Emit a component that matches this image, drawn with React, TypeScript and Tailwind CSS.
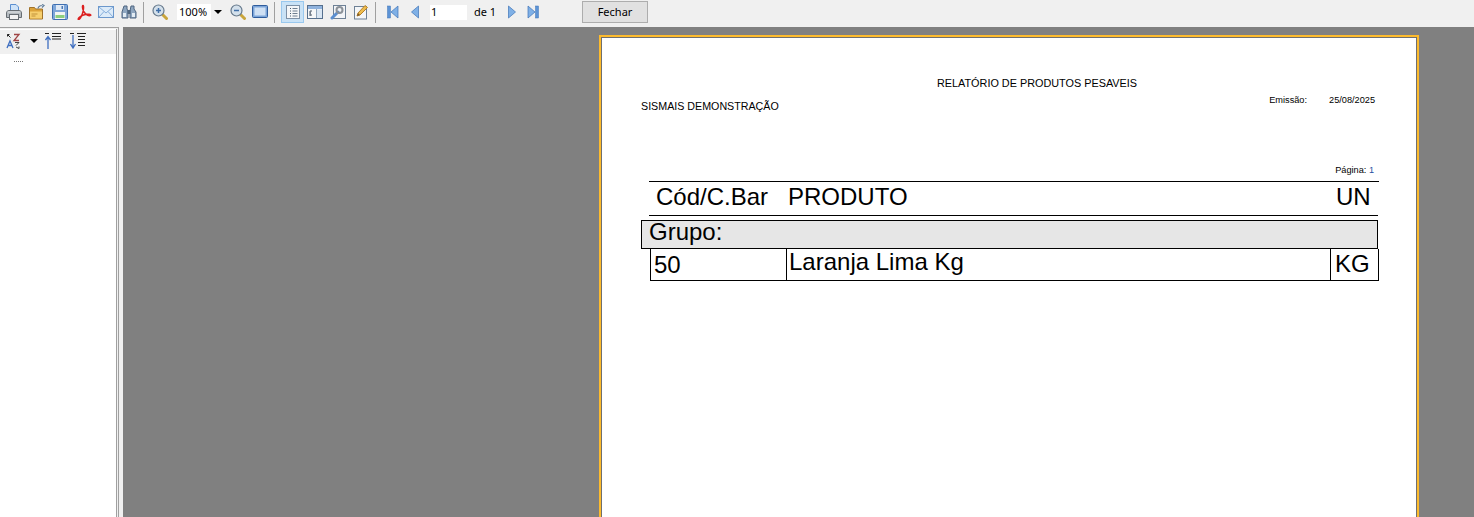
import type { ReactNode } from "react";

const Sep = ({ ml }: { ml: string }) => (
  <div className={`h-[21px] w-px bg-[#a0a0a0] ${ml}`} />
);

const Ico = ({ className, children }: { className: string; children: ReactNode }) => (
  <svg viewBox="0 0 16 16" className={`h-4 w-4 shrink-0 ${className}`}>
    {children}
  </svg>
);

const PrintIcon = () => (
  <Ico className="ml-[6px]">
    <path d="M4.500 .5h5.500l2.500 2.500v6h-8z" fill="#cfe3f8" stroke="#5b8fd0" />
    <path d="M.5 9q0-2.500 2.500-2.500h10q2.500 0 2.500 2.500v4.500H.5z" fill="#b4babf" stroke="#666c72" />
    <rect x="3.500" y="10.500" width="9" height="5" fill="#f2f2f2" stroke="#666c72" />
    <path d="M1.500 8h13" stroke="#e3e6e8" />
  </Ico>
);

const OpenIcon = () => (
  <Ico className="ml-[7px]">
    <path d="M.5 3.500h5l1 1.500h7v10H.5z" fill="#dca238" stroke="#a0722a" />
    <path d="M1 7.500h12V14.500H1z" fill="#f6cf6e" />
    <path d="M2.500 10h6M2.500 12h4" stroke="#c2923a" />
    <path d="M9 4.500q.5-3 4-3M13 .5l2 1-2 2" fill="none" stroke="#5e7b99" strokeWidth="1.200" />
  </Ico>
);

const SaveIcon = () => (
  <Ico className="ml-[7px]">
    <rect x=".5" y=".5" width="15" height="15" rx="1" fill="#7ea6d9" stroke="#3f6fb0" />
    <rect x="4" y="1" width="8" height="5" fill="#dfe9f5" />
    <rect x="9.500" y="2" width="1.500" height="3" fill="#4b78b4" />
    <rect x="3" y="8" width="10" height="7" fill="#f3f6f2" />
    <rect x="3.500" y="11" width="9" height="3" fill="#8ccf7e" />
  </Ico>
);

const PdfIcon = () => (
  <Ico className="ml-[8px]">
    <path
      d="M7 1.500c-1 0 -.5 4 1 6.500s5 4.500 6.500 3.500-3-2-7 -.5-6 4-5 4.500 3-3 4-6 1.500-8 .5-8z"
      fill="none"
      stroke="#dc2020"
      strokeWidth="1.500"
    />
  </Ico>
);

const MailIcon = () => (
  <Ico className="ml-[6px]">
    <rect x=".5" y="2.500" width="15" height="11" fill="#dcebf9" stroke="#6c98cc" />
    <path d="M1 3l7 6 7-6M1 13l5-5.500M15 13l-5-5.500" fill="none" stroke="#86aedb" />
  </Ico>
);

const BinocularsIcon = () => (
  <Ico className="ml-[7px]">
    <path d="M3 2h3v3l1 2v7H1V8z" fill="#8ea6c0" stroke="#4e6580" />
    <path d="M10 2h3v3l2 3v6H9V7z" fill="#8ea6c0" stroke="#4e6580" />
    <rect x="6.500" y="6" width="3" height="4" fill="#51677f" />
    <rect x="2" y="9" width="3" height="4" fill="#e3ecf4" />
    <rect x="11" y="9" width="3" height="4" fill="#e3ecf4" />
  </Ico>
);

const ZoomIcon = ({ plus, className }: { plus: boolean; className: string }) => (
  <Ico className={className}>
    <path d="M10.500 10.500l4 4" stroke="#c9a53c" strokeWidth="3" strokeLinecap="round" />
    <circle cx="6.500" cy="6.500" r="5.500" fill="#d3e0eb" stroke="#66798c" strokeWidth="1.200" />
    <path d="M4 6.500h5" stroke="#3f6fa8" strokeWidth="1.500" />
    {plus && <path d="M6.500 4v5" stroke="#3f6fa8" strokeWidth="1.500" />}
  </Ico>
);

const ViewIcon = () => (
  <Ico className="ml-[6px]">
    <rect x=".5" y="1.500" width="15" height="12" rx="1" fill="#7ba4d8" stroke="#2f5c9c" />
    <rect x="2.500" y="3.500" width="11" height="8" fill="#cfe0f4" />
  </Ico>
);

const PageLinesIcon = () => (
  <svg viewBox="0 0 16 16" className="h-4 w-4">
    <rect x="1.500" y="1.500" width="13" height="13" fill="#f4f6f8" stroke="#7d90a6" />
    <path d="M5 4.500h1M5 7h1M5 9.500h1M5 12h1" stroke="#46586c" />
    <path d="M7.500 4.500h5M7.500 7h5M7.500 9.500h5M7.500 12h5" stroke="#6f7f90" />
  </svg>
);

const TreeIcon = () => (
  <Ico className="ml-[3px]">
    <rect x=".5" y="1.500" width="15" height="13" fill="#f5f7f9" stroke="#56708e" />
    <rect x="1" y="2" width="14" height="3" fill="#8fb2dd" />
    <path d="M9.500 5v9" stroke="#8fa5bb" />
    <rect x="10" y="5.500" width="5" height="8.500" fill="#d9e6f3" />
    <path d="M3 7h2M3 9h1M3 11h2M3 7v5" stroke="#4c5b6b" fill="none" />
  </Ico>
);

const ToolsIcon = () => (
  <Ico className="ml-[7px]">
    <rect x="3.500" y="1.500" width="12" height="13" fill="#f2f4f7" stroke="#6e8196" />
    <path d="M2 14l6-6" stroke="#5b8fd0" strokeWidth="3" strokeLinecap="round" />
    <circle cx="9.500" cy="6" r="3" fill="none" stroke="#8b9198" strokeWidth="2" />
  </Ico>
);

const EditIcon = () => (
  <Ico className="ml-[7px]">
    <rect x="1.500" y="2.500" width="12" height="12.500" fill="#f4f6f8" stroke="#6e8196" />
    <path d="M4 12l1-3 7-7.500 2.500 2L7 11z" fill="#eebd4e" stroke="#b5802a" />
    <path d="M4 12l1-3 2 2z" fill="#7d5a2a" />
  </Ico>
);

const NavIcon = ({ kind, className }: { kind: "first" | "prev" | "next" | "last"; className: string }) => (
  <svg viewBox="0 0 12 14" className={`h-[14px] w-3 shrink-0 ${className}`}>
    {kind === "first" && (
      <>
        <rect x=".5" y="1" width="3" height="12" fill="#5c93d6" stroke="#3f74b8" strokeWidth=".5" />
        <path d="M11 1v12L4 7z" fill="#7fb0e6" stroke="#3f74b8" strokeWidth=".7" />
      </>
    )}
    {kind === "prev" && <path d="M9.500 1v12L2.500 7z" fill="#7fb0e6" stroke="#3f74b8" strokeWidth=".7" />}
    {kind === "next" && <path d="M2.500 1v12l7-6z" fill="#7fb0e6" stroke="#3f74b8" strokeWidth=".7" />}
    {kind === "last" && (
      <>
        <path d="M1 1v12l7-6z" fill="#7fb0e6" stroke="#3f74b8" strokeWidth=".7" />
        <rect x="8.500" y="1" width="3" height="12" fill="#5c93d6" stroke="#3f74b8" strokeWidth=".5" />
      </>
    )}
  </svg>
);

const Toolbar = () => (
  <div className="flex h-[27px] items-center bg-[#f0f0f0] pb-[3px] font-['Noto_Sans',sans-serif] text-[11px] text-black">
    <PrintIcon />
    <OpenIcon />
    <SaveIcon />
    <PdfIcon />
    <MailIcon />
    <BinocularsIcon />
    <Sep ml="ml-[6px]" />
    <ZoomIcon plus className="ml-[8px]" />
    <div className="ml-[9px] flex h-4 w-[47px] items-center justify-between bg-white pl-[2px]">
      <span>100%</span>
      <span className="flex h-4 w-[13px] items-center justify-center bg-[#f0f0f0]">
        <span className="h-0 w-0 border-x-4 border-t-4 border-x-transparent border-t-black" />
      </span>
    </div>
    <ZoomIcon plus={false} className="ml-[6px]" />
    <ViewIcon />
    <Sep ml="ml-[6px]" />
    <div className="ml-[6px] flex h-[22px] w-[23px] items-center justify-center border border-[#99c8ee] bg-[#c9e2f6]">
      <PageLinesIcon />
    </div>
    <TreeIcon />
    <ToolsIcon />
    <EditIcon />
    <Sep ml="ml-[6px]" />
    <NavIcon kind="first" className="ml-[11px]" />
    <NavIcon kind="prev" className="ml-[10px]" />
    <div className="ml-[9px] flex h-[15px] w-[37px] items-center bg-white pl-[1px]">1</div>
    <span className="ml-[7px] w-[22px] whitespace-nowrap">de 1</span>
    <NavIcon kind="next" className="ml-[10px]" />
    <NavIcon kind="last" className="ml-[9px]" />
    <button className="ml-[43px] h-[22px] w-[66px] border border-[#adadad] bg-[#e1e1e1] text-[11px]">
      Fechar
    </button>
  </div>
);

const SortAzIcon = () => (
  <svg viewBox="0 0 16 16" className="h-4 w-4">
    <path d="M1.500 1.500l3 3M1.500 1.500h2M1.500 1.500v2" stroke="#222" fill="none" />
    <path d="M8 1.500h5l-5 6h5" stroke="#a04545" strokeWidth="1.300" fill="none" />
    <path d="M1 15l3-7 3 7M2.200 12.500h3.600" stroke="#3f6fc0" strokeWidth="1.300" fill="none" />
    <path d="M9 9.500h4l-3 3M10 14l3 1.500M13 15.500v-2" stroke="#444" fill="none" />
  </svg>
);

const SortUpIcon = () => (
  <svg viewBox="0 0 16 16" className="h-4 w-4">
    <path d="M0 .5h4M7 .5h9M7 3.500h9M7 6h9" stroke="#222" />
    <path d="M3 16V4M.5 7L3 3.500 5.500 7" stroke="#3f6fc0" strokeWidth="1.300" fill="none" />
  </svg>
);

const SortDownIcon = () => (
  <svg viewBox="0 0 16 16" className="h-4 w-4">
    <path d="M0 .5h4M7 .5h9M8 3.500h7M8 6.500h7M8 9.500h7M8 12.500h7" stroke="#222" />
    <path d="M3 2v13M.5 11L3 15l2.500-4" stroke="#3f6fc0" strokeWidth="1.300" fill="none" />
  </svg>
);

const TreePanel = () => (
  <aside className="w-[123px] shrink-0 bg-[#f0f0f0]">
    {/* double frame round the tree */}
    <div className="h-full w-[119px] border-t border-r border-[#a0a0a0] pt-px">
      <div className="h-full w-[117px] border-r border-[#a0a0a0] bg-white pt-px">
        <div className="flex h-[24px] items-center bg-[#f0f0f0] pb-[2px] pl-[6px]">
          <SortAzIcon />
          <span className="ml-[8px] h-0 w-0 border-x-4 border-t-4 border-x-transparent border-t-black" />
          <span className="ml-[7px]"><SortUpIcon /></span>
          <span className="ml-[9px]"><SortDownIcon /></span>
        </div>
        <div className="ml-[14px] mt-[7px] w-[9px] border-t border-dotted border-[#777]" />
      </div>
    </div>
  </aside>
);

const Report = () => (
  <div className="ml-[476px] mt-[8px] h-[600px] w-[820px] shrink-0 border-2 border-[#fdbb2d] bg-[#6f6f6f] p-px font-['Liberation_Sans',Arial,sans-serif] text-black">
    <div className="h-full bg-white pl-[39px] pr-[39px] pt-[38px]">
      <div className="h-[15px] pl-[56px] text-center text-[10.85px] leading-[15px]">
        RELATÓRIO DE PRODUTOS PESAVEIS
      </div>
      <div className="mt-[1px] flex items-start justify-between">
        <span className="mt-[7px] text-[10.7px] leading-[15px]">SISMAIS DEMONSTRAÇÃO</span>
        <div className="mr-[2px] mt-[2px] flex gap-[22px] text-[9.200px] leading-[12px]">
          <span>Emissão:</span>
          <span>25/08/2025</span>
        </div>
      </div>
      <div className="mt-[50px] pr-[3px] text-right text-[9.200px] leading-[12px]">
        Página: <span className="text-[#1f4fa0]">1</span>
      </div>
      <div className="ml-[8px] mr-[-2px] mt-[5px] flex h-[34px] items-center border-t border-black pb-[4px] pl-[7px] text-[24px] leading-[30px]">
        <span className="w-[132px]">Cód/C.Bar</span>
        <span className="flex-1">PRODUTO</span>
        <span className="w-[43px]">UN</span>
      </div>
      <div className="ml-[8px] mr-[-1px] h-px bg-black" />
      <div className="mr-[-1px] mt-[4px] h-[29px] border border-black bg-[#e6e6e6] pl-[7px] text-[24px] leading-[22px]">
        Grupo:
      </div>
      <div className="ml-[9px] mr-[-2px] flex h-[32px] border-x border-b border-black text-[24px]">
        <span className="w-[135px] pl-[3px] leading-[32px]">50</span>
        <span className="flex-1 border-l border-black pl-[2px] leading-[26px]">Laranja Lima Kg</span>
        <span className="w-[48px] border-l border-black pl-[4px] leading-[30px]">KG</span>
      </div>
    </div>
  </div>
);

export default function App() {
  return (
    <div className="flex h-[517px] w-[1474px] flex-col overflow-hidden bg-[#808080]">
      <Toolbar />
      <div className="flex min-h-0 flex-1">
        <TreePanel />
        <Report />
      </div>
    </div>
  );
}
